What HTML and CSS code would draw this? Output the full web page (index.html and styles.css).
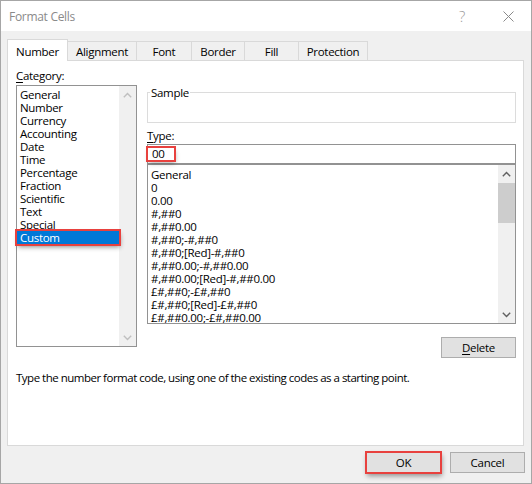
FILE: index.html
```html
<!DOCTYPE html>
<html>
<head>
<meta charset="utf-8">
<title>Format Cells</title>
<link rel="stylesheet" href="styles.css">
</head>
<body>
<div class="dialog">
  <div class="titlebar">
    <span class="title">Format Cells</span>
    <span class="tbtn help">?</span>
    <span class="tbtn close"><svg width="11" height="11" viewBox="0 0 11 11"><path d="M0.5 0.5 L10.5 10.5 M10.5 0.5 L0.5 10.5" stroke="#8a8a8a" stroke-width="1" fill="none"/></svg></span>
  </div>
  <div class="body">
    <div class="tabs">
      <div class="tab active w-number">Number</div>
      <div class="tab w-align">Alignment</div>
      <div class="tab w-font">Font</div>
      <div class="tab w-border">Border</div>
      <div class="tab w-fill">Fill</div>
      <div class="tab w-prot">Protection</div>
    </div>
    <div class="panel">
      <div class="columns">
        <div class="left">
          <div class="label cat-label"><u>C</u>ategory:</div>
          <div class="listbox cat">
            <div class="items">
              <div class="item">General</div>
              <div class="item">Number</div>
              <div class="item">Currency</div>
              <div class="item">Accounting</div>
              <div class="item">Date</div>
              <div class="item">Time</div>
              <div class="item">Percentage</div>
              <div class="item">Fraction</div>
              <div class="item">Scientific</div>
              <div class="item">Text</div>
              <div class="item">Special</div>
              <div class="item sel">Custom</div>
            </div>
            <div class="scrollbar disabled">
              <div class="sbtn"><svg width="9" height="6" viewBox="0 0 9 6"><polyline points="0.8,5.2 4.5,1.5 8.2,5.2" fill="none" stroke-width="1.4"/></svg></div>
              <div class="track"></div>
              <div class="sbtn"><svg width="9" height="6" viewBox="0 0 9 6"><polyline points="0.8,0.8 4.5,4.5 8.2,0.8" fill="none" stroke-width="1.4"/></svg></div>
            </div>
          </div>
        </div>
        <div class="right">
          <fieldset class="sample"><legend>Sample</legend></fieldset>
          <div class="label type-label"><u>T</u>ype:</div>
          <div class="input"><span class="hl">00</span></div>
          <div class="listbox types">
            <div class="items">
              <div class="item">General</div>
              <div class="item">0</div>
              <div class="item">0.00</div>
              <div class="item">#,##0</div>
              <div class="item">#,##0.00</div>
              <div class="item">#,##0;-#,##0</div>
              <div class="item">#,##0;[Red]-#,##0</div>
              <div class="item">#,##0.00;-#,##0.00</div>
              <div class="item">#,##0.00;[Red]-#,##0.00</div>
              <div class="item">£#,##0;-£#,##0</div>
              <div class="item">£#,##0;[Red]-£#,##0</div>
              <div class="item">£#,##0.00;-£#,##0.00</div>
              <div class="item">£#,##0.00;[Red]-£#,##0.00</div>
            </div>
            <div class="scrollbar">
              <div class="sbtn"><svg width="9" height="6" viewBox="0 0 9 6"><polyline points="0.8,5.2 4.5,1.5 8.2,5.2" fill="none" stroke-width="1.4"/></svg></div>
              <div class="track"><div class="thumb"></div></div>
              <div class="sbtn"><svg width="9" height="6" viewBox="0 0 9 6"><polyline points="0.8,0.8 4.5,4.5 8.2,0.8" fill="none" stroke-width="1.4"/></svg></div>
            </div>
          </div>
          <div class="delete-row"><button class="btn"><u>D</u>elete</button></div>
        </div>
      </div>
      <p class="desc">Type the number format code, using one of the existing codes as a starting point.</p>
    </div>
    <div class="footer">
      <button class="btn ok">OK</button>
      <button class="btn">Cancel</button>
    </div>
  </div>
</div>
</body>
</html>
```
FILE: styles.css
```css
body {
  margin: 0;
  font-family: "Open Sans", "Noto Sans", sans-serif;
  font-size: 11.5px;
  letter-spacing: -0.3px;
  color: #000;
  background: #fff;
}
u { text-decoration: underline; text-underline-offset: 2px; }

.dialog {
  width: 532px;
  height: 484px;
  box-sizing: border-box;
  border: 1px solid #a6a6a6;
  background: #f0f0f0;
  display: flex;
  flex-direction: column;
}

.titlebar {
  height: 30px;
  background: #fff;
  display: flex;
  align-items: center;
  padding-left: 8px;
}
.title {
  flex: 1;
  color: #8a8a8a;
  font-size: 12px;
}
.tbtn {
  width: 46px;
  height: 30px;
  display: flex;
  align-items: center;
  justify-content: center;
}
.help {
  color: #9a9a9a;
  font-size: 15px;
  font-weight: 300;
}

.body {
  flex: 1;
  padding: 8px 7px 0 6px;
}

.tabs {
  display: flex;
  align-items: flex-end;
  height: 22px;
  margin-bottom: -1px;
}
.tab {
  box-sizing: border-box;
  height: 19px;
  margin-bottom: 1px;
  margin-right: -1px;
  border: 1px solid #d9d9d9;
  border-bottom: 0;
  background: #f0f0f0;
  text-align: center;
  padding-top: 1px;
  line-height: 17px;
}
.tab.active {
  height: 22px;
  margin-bottom: 0;
  background: #fff;
  position: relative;
  z-index: 1;
  padding-top: 2px;
  line-height: 19px;
}
.w-number { width: 61px; }
.w-align { width: 70px; }
.w-font { width: 56px; }
.w-border { width: 54px; }
.w-fill { width: 55px; }
.w-prot { width: 70px; }

.panel {
  height: 386px;
  box-sizing: border-box;
  border: 1px solid #d9d9d9;
  background: #fff;
  padding: 7px 6px 0 8px;
}

.columns {
  display: flex;
  gap: 10px;
}
.left { width: 121px; }
.right { width: 369px; }

.label {
  height: 16px;
  line-height: 16px;
}
.cat-label { margin-bottom: 1px; }
.type-label { margin-top: 5px; }

.listbox {
  box-sizing: border-box;
  border: 1px solid #929292;
  background: #fff;
  display: flex;
}
.cat { height: 262px; }
.types { height: 160px; }

.items {
  flex: 1;
  min-width: 0;
  padding-top: 2px;
}
.types .items {
  padding-top: 3px;
  overflow: hidden;
}
.item {
  height: 13px;
  line-height: 13px;
  padding-left: 3px;
  white-space: nowrap;
}
.item.sel {
  position: relative;
  z-index: 2;
  background: #0078d7;
  color: #fff;
  outline: 2px solid #e8413e;
  box-shadow: 1px 3px 5px rgba(0, 0, 0, 0.45);
}

.scrollbar {
  width: 17px;
  background: #f0f0f0;
  display: flex;
  flex-direction: column;
}
.sbtn {
  height: 17px;
  display: flex;
  align-items: center;
  justify-content: center;
}
.sbtn svg { stroke: #606060; }
.disabled .sbtn svg { stroke: #bfbfbf; }
.track { flex: 1; }
.thumb {
  height: 40px;
  margin-top: 1px;
  background: #cdcdcd;
}

.sample {
  margin: 18px 0 0;
  padding: 0 0 0 2px;
  height: 37px;
  box-sizing: border-box;
  border: 1px solid #dcdcdc;
  min-inline-size: 0;
}
.sample legend {
  padding: 0 1px;
  line-height: 13px;
}

.input {
  box-sizing: border-box;
  height: 20px;
  border: 1px solid #929292;
  padding-top: 3px;
}
.hl {
  display: inline-block;
  vertical-align: top;
  box-sizing: border-box;
  width: 26px;
  height: 12px;
  line-height: 12px;
  padding-left: 4px;
  outline: 2px solid #e8413e;
  box-shadow: 1px 3px 5px rgba(0, 0, 0, 0.35);
}

.delete-row {
  display: flex;
  justify-content: flex-end;
  margin-top: 13px;
}
.btn {
  width: 75px;
  height: 21px;
  box-sizing: border-box;
  border: 1px solid #adadad;
  background: #e1e1e1;
  font: inherit;
  letter-spacing: inherit;
  color: #000;
  padding: 0;
  line-height: 19px;
}

.desc {
  margin: 12px 0 0;
  line-height: 16px;
  letter-spacing: -0.5px;
}

.footer {
  display: flex;
  justify-content: flex-end;
  gap: 9px;
  margin-top: 6px;
  margin-right: -1px;
}
.btn.ok {
  position: relative;
  outline: 2px solid #e8413e;
  outline-offset: -1px;
  box-shadow: 1px 3px 5px rgba(0, 0, 0, 0.4);
}
```
